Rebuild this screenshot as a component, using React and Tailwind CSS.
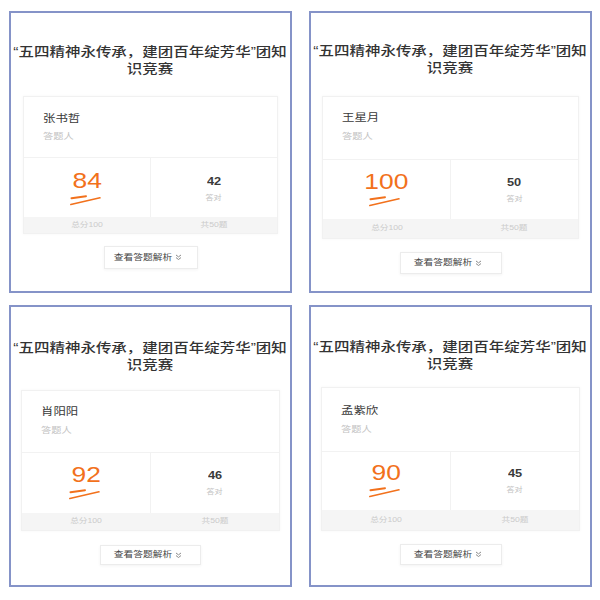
import React from "react";

const panels = [
  {
    name: "张书哲", score: "84", correct: "42",
    titlePt: "pt-[31px]", cardMx: "mx-[12px]", cardMt: "mt-[18px]",
    headH: "h-[61px]", headPt: "pt-[15px]", subMt: "mt-[5px]",
    statsH: "h-[59px]", statsPt: "pt-[11px]", footH: "h-[16px]",
    btnMt: "mt-[12px]", btnW: "w-[94px]", btnH: "h-[23px]",
  },
  {
    name: "王星月", score: "100", correct: "50",
    titlePt: "pt-[30px]", cardMx: "mx-[11px]", cardMt: "mt-[19px]",
    headH: "h-[63px]", headPt: "pt-[14px]", subMt: "mt-[6px]",
    statsH: "h-[59px]", statsPt: "pt-[10px]", footH: "h-[19px]",
    btnMt: "mt-[13px]", btnW: "w-[102px]", btnH: "h-[22px]",
  },
  {
    name: "肖阳阳", score: "92", correct: "46",
    titlePt: "pt-[33px]", cardMx: "mx-[10px]", cardMt: "mt-[16px]",
    headH: "h-[62px]", headPt: "pt-[14px]", subMt: "mt-[6px]",
    statsH: "h-[60px]", statsPt: "pt-[10px]", footH: "h-[17px]",
    btnMt: "mt-[14px]", btnW: "w-[101px]", btnH: "h-[20px]",
  },
  {
    name: "孟紫欣", score: "90", correct: "45",
    titlePt: "pt-[32px]", cardMx: "mx-[10px]", cardMt: "mt-[14px]",
    headH: "h-[64px]", headPt: "pt-[16px]", subMt: "mt-[6px]",
    statsH: "h-[58px]", statsPt: "pt-[9px]", footH: "h-[20px]",
    btnMt: "mt-[13px]", btnW: "w-[102px]", btnH: "h-[21px]",
  },
];

function Swoosh() {
  return (
    <svg width="31" height="12" viewBox="0 0 31 12" className="-ml-[3px]">
      <path d="M1.5 4.2 L16 2.2" stroke="#f2711c" strokeWidth="2" strokeLinecap="round" fill="none" />
      <path d="M0.8 10.6 L30 3.8" stroke="#f2711c" strokeWidth="1.5" strokeLinecap="round" fill="none" />
    </svg>
  );
}

function Chevrons() {
  return (
    <svg width="7" height="7" viewBox="0 0 7 7" className="ml-[8px]">
      <path d="M1.3 1.2 L3.5 2.9 L5.7 1.2" stroke="#8a8a8a" strokeWidth="1" fill="none" strokeLinecap="round" strokeLinejoin="round" />
      <path d="M1.3 3.8 L3.5 5.5 L5.7 3.8" stroke="#8a8a8a" strokeWidth="1" fill="none" strokeLinecap="round" strokeLinejoin="round" />
    </svg>
  );
}

function Panel({ p }) {
  return (
    <div className="border-2 border-[#8593c8] bg-white flex flex-col">
      <div className={"text-center text-[12.7px] leading-[17px] font-medium text-[#333] " + p.titlePt}>
        <div><span className="inline-block whitespace-nowrap scale-x-[1.22]">“五四精神永传承，建团百年绽芳华”团知</span></div>
        <div><span className="inline-block whitespace-nowrap scale-x-[1.22]">识竞赛</span></div>
      </div>
      <div className={"border border-[#f1f1f1] shadow-[0_0_3px_rgba(0,0,0,0.04)] bg-white " + p.cardMx + " " + p.cardMt}>
        <div className={"border-b border-[#f2f2f2] pl-[19px] " + p.headH + " " + p.headPt}>
          <div className="text-[10.2px] leading-[14px] text-[#3a3a3a]">
            <span className="inline-block origin-left scale-x-[1.22]">{p.name}</span>
          </div>
          <div className={"text-[8.4px] leading-[10px] text-[#c2c2c2] " + p.subMt}>
            <span className="inline-block origin-left scale-x-[1.22]">答题人</span>
          </div>
        </div>
        <div className={"grid grid-cols-2 " + p.statsH}>
          <div className={"flex flex-col items-center border-r border-[#f2f2f2] " + p.statsPt}>
            <div className="h-[24px] leading-[24px] text-[22px] text-[#f2711c] font-['Liberation_Sans',sans-serif]">
              <span className="inline-block scale-x-[1.2]">{p.score}</span>
            </div>
            <div className="mt-[1px]"><Swoosh /></div>
          </div>
          <div className={"flex flex-col items-center " + p.statsPt}>
            <div className="h-[24px] leading-[24px] text-[11px] text-[#3a3a3a] font-semibold">
              <span className="inline-block scale-x-[1.16]">{p.correct}</span>
            </div>
            <div className="mt-[1px] h-[8px] leading-[8px] text-[6.6px] text-[#c2c2c2]">
              <span className="inline-block scale-x-[1.22]">答对</span>
            </div>
          </div>
        </div>
        <div className={"grid grid-cols-2 bg-[#f5f5f5] text-[7.1px] text-[#cbcbcb] " + p.footH}>
          <div className="flex items-center justify-center">
            <span className="inline-block scale-x-[1.22]">总分100</span>
          </div>
          <div className="flex items-center justify-center">
            <span className="inline-block scale-x-[1.22]">共50题</span>
          </div>
        </div>
      </div>
      <div className={"self-center flex items-center justify-center border border-[#ececec] shadow-[0_1px_3px_rgba(0,0,0,0.05)] bg-white " + p.btnMt + " " + p.btnW + " " + p.btnH}>
        <span className="inline-block text-[8px] leading-[10px] text-[#444] scale-x-[1.22]">查看答题解析</span>
        <Chevrons />
      </div>
    </div>
  );
}

export default function App() {
  return (
    <div className="w-[600px] h-[600px] bg-white pt-[11px] pl-[9px] font-['Liberation_Sans','Noto_Sans_CJK_SC',sans-serif]">
      <div className="grid grid-cols-[283px_283px] grid-rows-[282px_282px] gap-x-[17px] gap-y-[12px]">
        {panels.map((p, i) => (
          <Panel key={i} p={p} />
        ))}
      </div>
    </div>
  );
}
